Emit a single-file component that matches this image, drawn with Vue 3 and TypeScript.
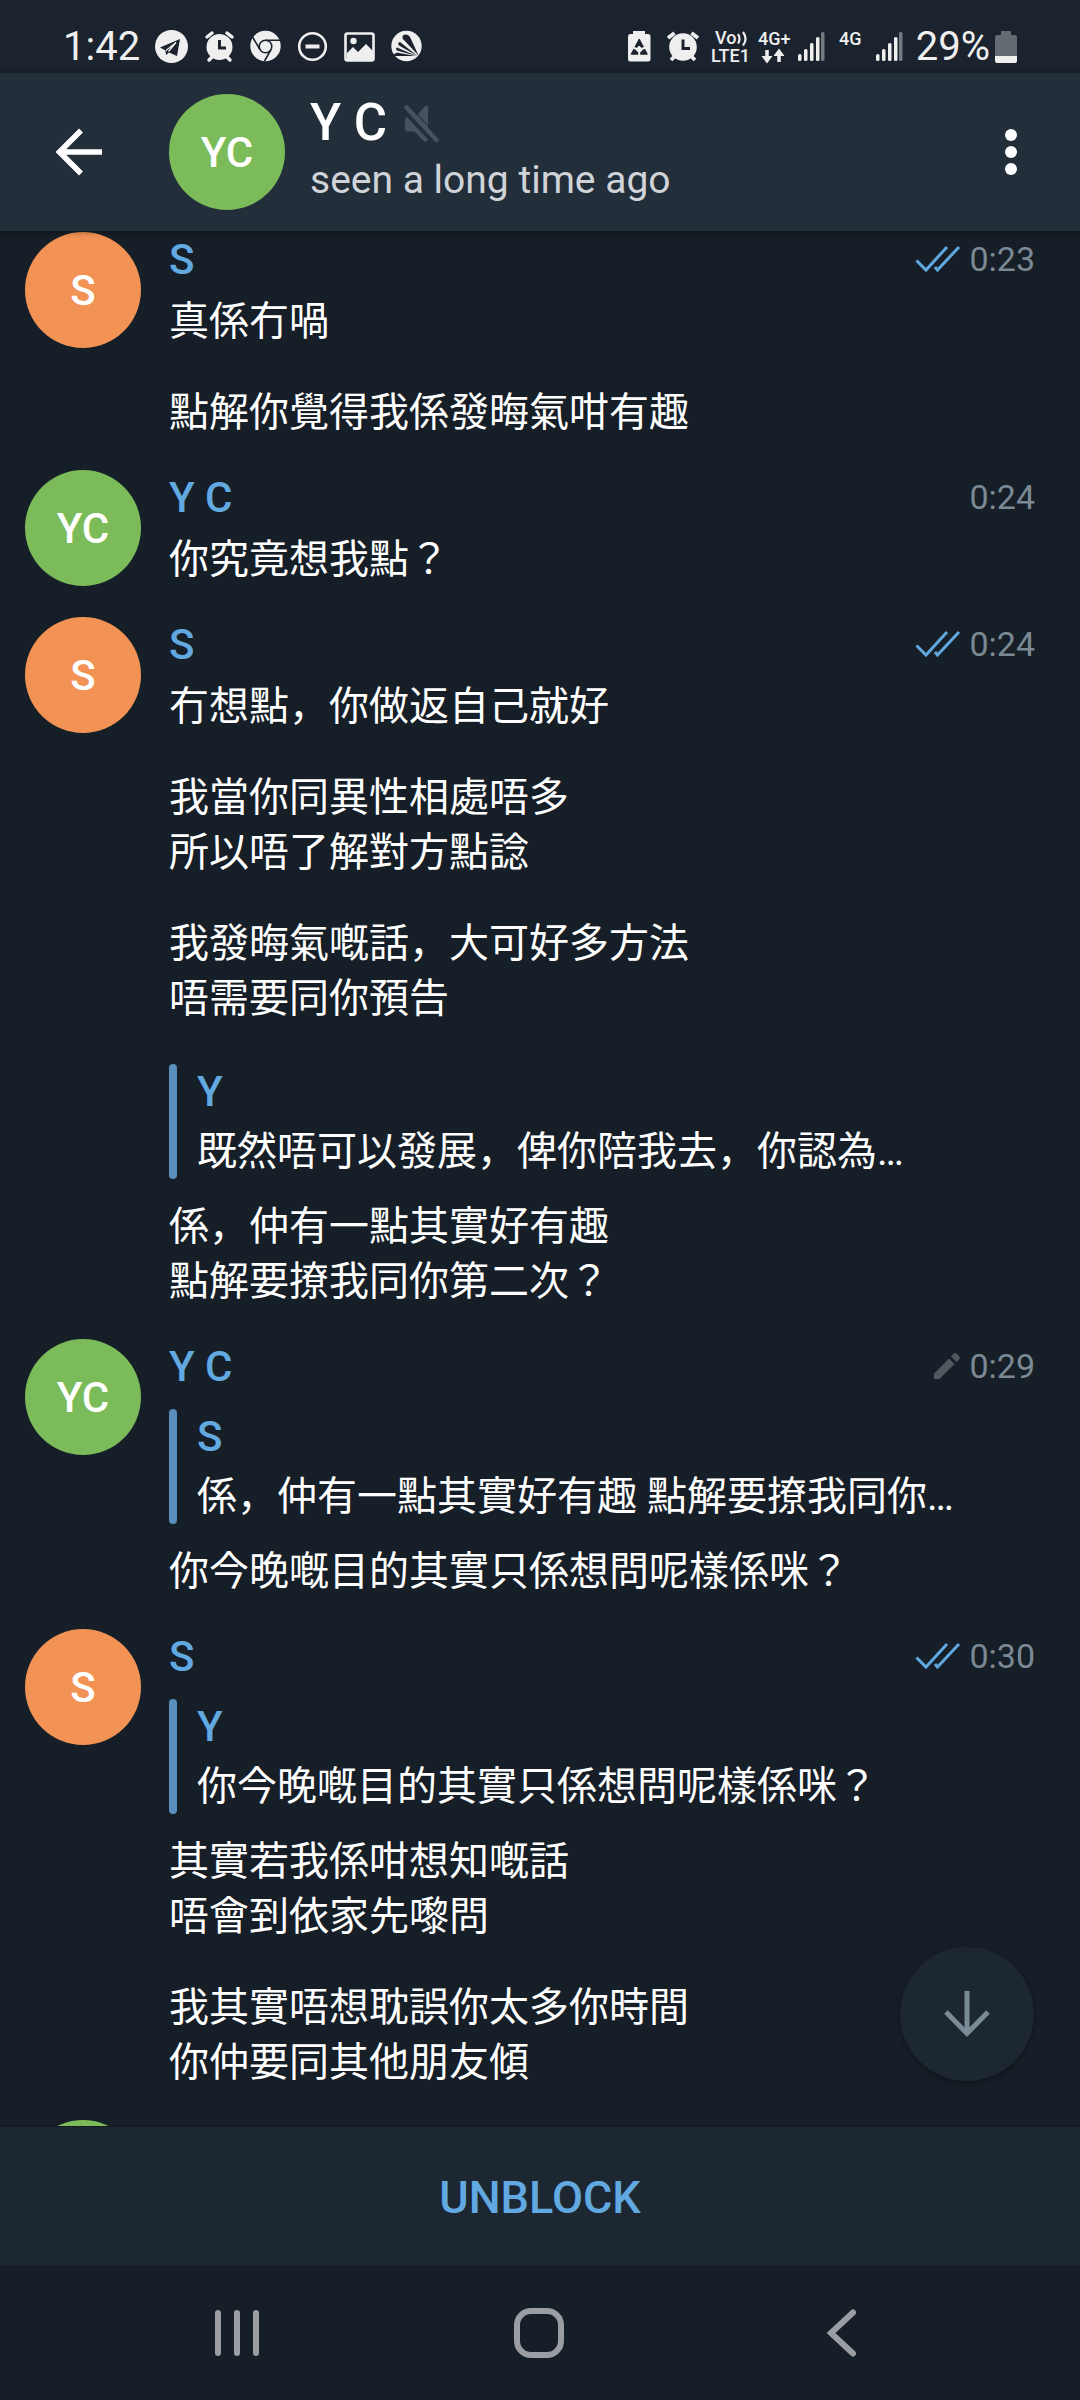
<script setup lang="ts">
interface Quote {
  author: string
  text: string
}

interface Block {
  quote?: Quote
  paragraphs: string[][]
}

interface Message {
  id: number
  author: string
  initials: string
  tone: 'orange' | 'green'
  time: string
  mark: 'read' | 'edited' | 'none'
  blocks: Block[]
}

const messages: Message[] = [
  {
    id: 1,
    author: 'S',
    initials: 'S',
    tone: 'orange',
    time: '0:23',
    mark: 'read',
    blocks: [{ paragraphs: [['真係冇喎'], ['點解你覺得我係發晦氣咁有趣']] }],
  },
  {
    id: 2,
    author: 'Y C',
    initials: 'YC',
    tone: 'green',
    time: '0:24',
    mark: 'none',
    blocks: [{ paragraphs: [['你究竟想我點？']] }],
  },
  {
    id: 3,
    author: 'S',
    initials: 'S',
    tone: 'orange',
    time: '0:24',
    mark: 'read',
    blocks: [
      {
        paragraphs: [
          ['冇想點，你做返自己就好'],
          ['我當你同異性相處唔多', '所以唔了解對方點諗'],
          ['我發晦氣嘅話，大可好多方法', '唔需要同你預告'],
        ],
      },
      {
        quote: { author: 'Y', text: '既然唔可以發展，俾你陪我去，你認為…' },
        paragraphs: [['係，仲有一點其實好有趣', '點解要撩我同你第二次？']],
      },
    ],
  },
  {
    id: 4,
    author: 'Y C',
    initials: 'YC',
    tone: 'green',
    time: '0:29',
    mark: 'edited',
    blocks: [
      {
        quote: { author: 'S', text: '係，仲有一點其實好有趣 點解要撩我同你…' },
        paragraphs: [['你今晚嘅目的其實只係想問呢樣係咪？']],
      },
    ],
  },
  {
    id: 5,
    author: 'S',
    initials: 'S',
    tone: 'orange',
    time: '0:30',
    mark: 'read',
    blocks: [
      {
        quote: { author: 'Y', text: '你今晚嘅目的其實只係想問呢樣係咪？' },
        paragraphs: [
          ['其實若我係咁想知嘅話', '唔會到依家先嚟問'],
          ['我其實唔想耽誤你太多你時間', '你仲要同其他朋友傾'],
        ],
      },
    ],
  },
  { id: 6, author: '', initials: '', tone: 'green', time: '', mark: 'none', blocks: [] },
]

const signalBars = [7, 12, 18, 24]
</script>

<template>
  <div class="app">
    <div class="status">
      <span class="clock">1:42</span>
      <svg class="notices" width="268" height="36" viewBox="154 29 268 36" aria-hidden="true">
        <circle cx="171.500" cy="46.500" r="16.500" fill="#efefef" />
        <path d="M160 47.500 180 39 177 56 169 52.500 166 55 165.500 50.500Z" fill="#1c232e" />
        <path d="M166 50.500 176 42.500 168.500 51.500" fill="none" stroke="#efefef" stroke-width="1.200" />
        <g fill="#efefef">
          <circle cx="219.500" cy="47" r="13" />
          <path d="M207 37 212 33M232 37 227 33M209 60 212 57M230 60 227 57" stroke="#efefef" stroke-width="3.500" stroke-linecap="round" />
        </g>
        <path d="M219.500 40V48H226" fill="none" stroke="#1c232e" stroke-width="3" />
        <circle cx="265.500" cy="46" r="15.200" fill="#efefef" />
        <g fill="none" stroke="#1c232e" stroke-width="1.600">
          <circle cx="265.500" cy="46.500" r="6.300" />
          <path d="M265.500 40.200H280M260 49.700 252.500 37M271 49.700 264.500 61" />
        </g>
        <g fill="none" stroke="#efefef">
          <circle cx="312.500" cy="46.500" r="13.300" stroke-width="2.600" />
          <path d="M305.500 46.500H319.500" stroke-width="4" />
          <rect x="345.500" y="33.500" width="28" height="27" rx="2" stroke-width="2.600" />
        </g>
        <circle cx="353.500" cy="41" r="3.200" fill="#efefef" />
        <path d="M347 53 353 47 358 52 366 44 373 51V60H347Z" fill="#efefef" />
        <circle cx="406.500" cy="46" r="15.200" fill="#efefef" />
        <g fill="#1c232e">
          <path d="M418.500 55.500 402.500 38.500Q402 34.500 405.500 34.500 409 34.500 410.500 38Z" />
          <path d="M417.500 56 399 45.500Q397 42.500 400 42Z" />
          <path d="M416.500 56 397 50.500Q395 48.500 397 47.500Z" />
          <path d="M415 56 391 56 397 52.500Z" />
        </g>
      </svg>
      <svg class="radios" width="278" height="36" viewBox="626 29 278 36" aria-hidden="true">
        <path d="M632 31H644V34H647Q649.500 34 649.500 36.500V59Q649.500 61.500 647 61.500H629Q627 61.500 627 59V36.500Q627 34 629 34H632Z" fill="#efefef" />
        <path d="M638.200 39.500 646 54H630.500Z" fill="#1c232e" stroke="#1c232e" stroke-width="1.500" stroke-linejoin="round" />
        <path d="M638.200 46V56M632.500 47.500 638.200 50.500 644 47.500" fill="none" stroke="#efefef" stroke-width="2" />
        <circle cx="638.200" cy="49.500" r="2.800" fill="#efefef" />
        <circle cx="682" cy="47" r="13.800" fill="#efefef" />
        <path d="M667 38 673.500 33M697 38 690.500 33M670 60 674 56M694 60 690 56" stroke="#efefef" stroke-width="3.800" />
        <path d="M682 39.500V48.500H689" fill="none" stroke="#1c232e" stroke-width="3" />
        <g class="net">
          <text x="714" y="44">Vo</text>
          <text x="710" y="62">LTE1</text>
          <text x="757" y="45">4G+</text>
          <text x="838" y="45">4G</text>
        </g>
        <path d="M737 34Q740 39 737 43.500M742 32Q747 39 742 45.500" fill="none" stroke="#efefef" stroke-width="2.200" />
        <path d="M766 50V60M778 62V52" stroke="#efefef" stroke-width="3.500" />
        <path d="M760.500 56H771.500L766 63.500ZM772.500 56H783.500L778 48.500Z" fill="#efefef" />
        <g v-for="left in [797, 875]" :key="left">
          <rect
            v-for="(bar, i) in signalBars"
            :key="bar"
            :x="left + i * 6"
            :y="61 - bar"
            width="3.500"
            :height="bar"
            rx="1.500"
            fill="#efefef"
          />
          <rect :x="left + 23" y="32" width="3.500" height="29" rx="1.500" fill="#747a82" />
        </g>
      </svg>
      <span class="charge">29%</span>
      <svg class="battery" width="22" height="33" viewBox="0 0 22 33" aria-hidden="true">
        <path d="M6 1H16V5H20Q22 5 22 7V22H0V7Q0 5 2 5H6Z" fill="#646a72" />
        <path d="M0 25H22V31Q22 33 20 33H2Q0 33 0 31Z" fill="#efefef" />
        <path d="M0 22H22V26H0Z" fill="#646a72" />
      </svg>
    </div>

    <header class="bar">
      <button class="icon-btn back" aria-label="Back">
        <svg width="46" height="48" viewBox="0 0 46 48">
          <path d="M46 24H5M25 2.500 3.500 24 25 45.500" fill="none" stroke="#fff" stroke-width="5.500" />
        </svg>
      </button>
      <span class="avatar green">YC</span>
      <div class="who">
        <h1 class="title">
          Y C
          <svg width="36" height="40" viewBox="0 0 36 40" aria-hidden="true">
            <path d="M13 12 21 3.500Q24 1 24 5V25Z" fill="#46525d" />
            <path d="M1 16Q1 14 3 14L24 36.500Q22 41 18.500 37L10.500 28.500H4Q1 28.500 1 25.500Z" fill="#46525d" />
            <path d="M5.500 2.500 35.500 35" stroke="#222e3a" stroke-width="1" />
            <path d="M2.500 4.500 32.500 37" stroke="#46525d" stroke-width="4.500" stroke-linecap="round" />
          </svg>
        </h1>
        <p class="seen">seen a long time ago</p>
      </div>
      <button class="icon-btn more" aria-label="More options">
        <svg width="12" height="48" viewBox="0 0 12 48" fill="#fff">
          <circle cx="6" cy="7" r="6" />
          <circle cx="6" cy="24" r="6" />
          <circle cx="6" cy="41" r="6" />
        </svg>
      </button>
    </header>

    <main class="chat">
      <div class="feed">
        <article v-for="m in messages" :key="m.id" class="message">
          <span class="avatar" :class="m.tone">{{ m.initials }}</span>
          <div class="body">
            <div class="meta">
              <span class="author">{{ m.author }}</span>
              <svg v-if="m.mark === 'read'" width="46" height="28" viewBox="0 0 46 28" aria-label="Read">
                <path d="M1.500 15.500 11 25 32 2M20 22 22.500 25 44 2" fill="none" stroke="#5fa8e0" stroke-width="3" />
              </svg>
              <svg v-if="m.mark === 'edited'" width="28" height="28" viewBox="0 0 28 28" aria-label="Edited">
                <path d="M1 21.500 16 6.500 21.500 12 6.500 27H1ZM18 4.500 21 1.500Q22.500 .500 24 2L26 4Q27.500 5.500 26.500 7L23.500 10Z" fill="#50585f" />
              </svg>
              <time class="time">{{ m.time }}</time>
            </div>
            <div v-for="(b, bi) in m.blocks" :key="bi" class="block">
              <blockquote v-if="b.quote" class="quote">
                <cite class="author">{{ b.quote.author }}</cite>
                <p class="line">{{ b.quote.text }}</p>
              </blockquote>
              <div class="text">
                <p v-for="(p, pi) in b.paragraphs" :key="pi" class="para">
                  <span v-for="line in p" :key="line" class="line">{{ line }}</span>
                </p>
              </div>
            </div>
          </div>
        </article>
      </div>
      <button class="jump" aria-label="Scroll to latest">
        <svg width="48" height="48" viewBox="0 0 48 48">
          <path d="M24 1V43M3 22 24 43.500 45 22" fill="none" stroke="#7b8b95" stroke-width="5" />
        </svg>
      </button>
    </main>

    <button class="unblock">UNBLOCK</button>

    <nav class="keys">
      <button class="icon-btn" aria-label="Recents">
        <svg width="50" height="50" viewBox="0 0 50 50">
          <path d="M6 5V45M25 5V45M44 5V45" stroke="#9a9da1" stroke-width="6" stroke-linecap="round" />
        </svg>
      </button>
      <button class="icon-btn" aria-label="Home">
        <svg width="50" height="50" viewBox="0 0 50 50">
          <rect x="3" y="3" width="44" height="44" rx="14" fill="none" stroke="#9a9da1" stroke-width="6" />
        </svg>
      </button>
      <button class="icon-btn" aria-label="Back">
        <svg width="50" height="50" viewBox="0 0 50 50">
          <path d="M37 4.500 15 25 37 45.500" fill="none" stroke="#9a9da1" stroke-width="6" stroke-linecap="round" />
        </svg>
      </button>
    </nav>
  </div>
</template>

<style>
body {
  background: #161e27;
}
</style>

<style scoped>
.app {
  display: flex;
  flex-direction: column;
  height: 100vh;
  background: #161e27;
  color: #fff;
  font-family: Roboto, "Noto Sans CJK JP", sans-serif;
  font-size: 40px;
}

button {
  border: 0;
  padding: 0;
  background: none;
  color: inherit;
  font: inherit;
}

p,
h1,
blockquote {
  margin: 0;
}

svg {
  display: block;
  flex: none;
}

.status {
  display: flex;
  flex: none;
  align-items: center;
  height: 73px;
  padding: 20px 63px 0 63px;
  box-sizing: border-box;
  background: #1b232e;
  color: #efefef;
  line-height: 50px;
}

.notices {
  margin-left: 14px;
}

.radios {
  margin-left: auto;
}

.net {
  fill: #efefef;
  font-size: 18px;
  font-weight: 500;
}

.charge {
  margin: 0 5px 0 11px;
}

.bar {
  position: relative;
  z-index: 1;
  display: flex;
  flex: none;
  align-items: center;
  height: 158px;
  padding: 0 48px 0 36px;
  box-sizing: border-box;
  background: #222e3a;
  box-shadow: 0 1px 6px rgba(0, 0, 0, 0.4);
}

.icon-btn {
  display: flex;
  align-items: center;
  justify-content: center;
  height: 96px;
}

.back {
  width: 86px;
  margin-right: 47px;
}

.more {
  width: 42px;
}

.avatar {
  display: flex;
  flex: none;
  align-items: center;
  justify-content: center;
  width: 116px;
  height: 116px;
  border-radius: 50%;
  font-size: 42px;
  font-weight: 500;
}

.green {
  background: #7bbb59;
}

.orange {
  background: #f29355;
}

.who {
  flex: 1;
  margin-left: 25px;
  padding-bottom: 4px;
}

.title {
  display: flex;
  align-items: center;
  gap: 17px;
  font-size: 51px;
  font-weight: 500;
  line-height: 60px;
}

.seen {
  color: #d0d4d8;
  font-size: 39px;
  line-height: 54px;
}

.chat {
  position: relative;
  flex: 1;
  min-height: 0;
  overflow: hidden;
}

.feed {
  height: 100%;
  padding: 1px 45px 0 25px;
  box-sizing: border-box;
  overflow-y: auto;
  scrollbar-width: none;
}

.message {
  display: flex;
  gap: 28px;
}

.body {
  flex: 1;
  min-width: 0;
  padding-bottom: 30px;
}

.meta {
  display: flex;
  align-items: center;
  gap: 8px;
  height: 54px;
}

.author {
  flex: 1;
  color: #61a9e0;
  font-size: 42px;
  font-style: normal;
  font-weight: 500;
  line-height: 56px;
}

.meta .author {
  padding-top: 2px;
}

.time {
  color: #7a8993;
  font-size: 34px;
}

.block + .block {
  padding-top: 22px;
}

.quote {
  display: flex;
  flex-direction: column;
  gap: 4px;
  position: relative;
  margin: 16px 0 20px;
  padding-left: 28px;
}

.quote::before {
  content: "";
  position: absolute;
  inset: 0 auto 0 0;
  width: 8px;
  border-radius: 4px;
  background: #588fbd;
}

.text {
  display: flex;
  flex-direction: column;
  gap: 36px;
}

.meta + .block > .text:first-child {
  padding-top: 8px;
}

.line {
  display: block;
  line-height: 55px;
}

.jump {
  position: absolute;
  right: 46px;
  bottom: 45px;
  display: flex;
  align-items: center;
  justify-content: center;
  width: 134px;
  height: 134px;
  border-radius: 50%;
  background: #1d2732;
  box-shadow: 0 2px 5px rgba(0, 0, 0, 0.35);
}

.unblock {
  flex: none;
  height: 139px;
  padding-top: 3px;
  border-top: 1px solid #141a22;
  background: #1d2732;
  color: #61a9e0;
  font-size: 45px;
  font-weight: 500;
}

.keys {
  display: flex;
  flex: none;
  align-items: center;
  justify-content: space-between;
  height: 135px;
  padding: 0 214px 0 212px;
}
</style>
